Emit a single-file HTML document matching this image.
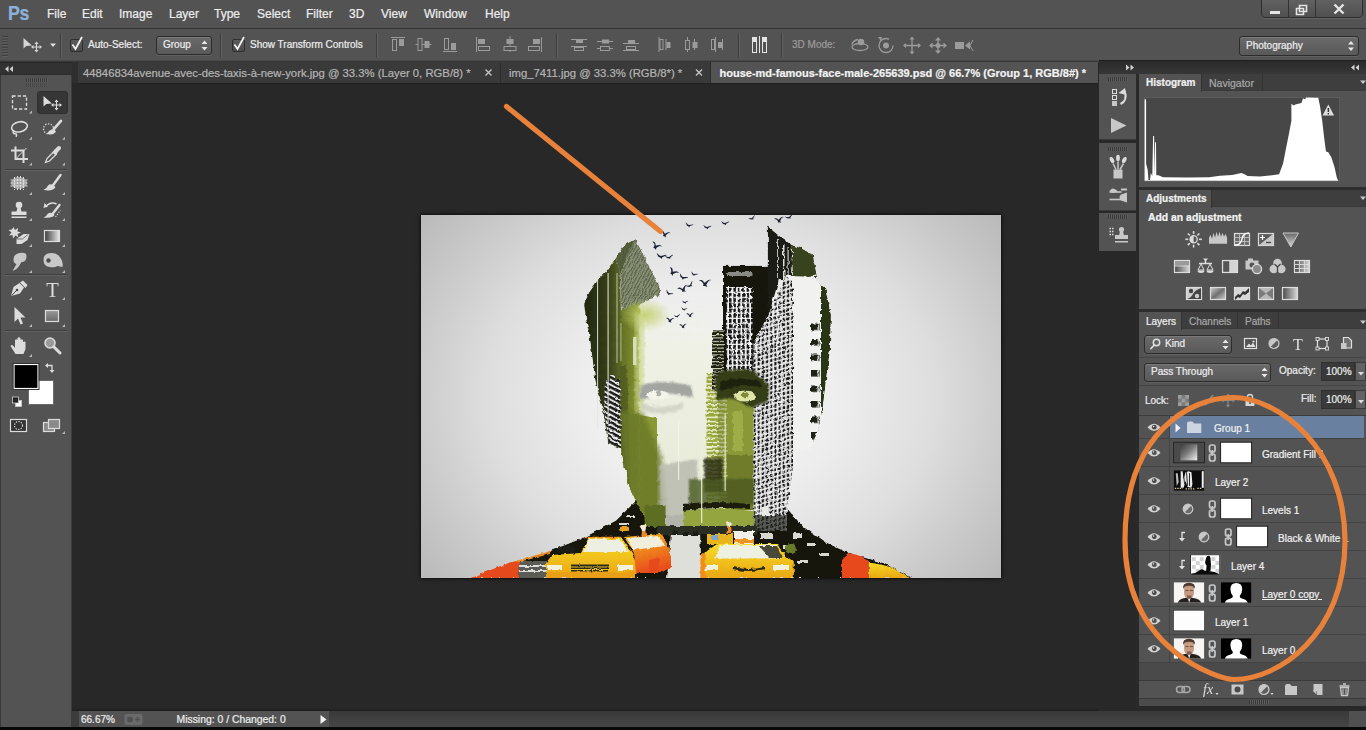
<!DOCTYPE html>
<html><head><meta charset="utf-8"><title>Photoshop</title>
<style>
*{box-sizing:border-box;margin:0;padding:0}
html,body{width:1366px;height:730px;overflow:hidden;background:#282828}
body{position:relative;font-family:"Liberation Sans",sans-serif;font-size:10px;color:#ececec;-webkit-text-stroke:.22px currentColor}
.a{position:absolute}
.t{position:absolute;white-space:nowrap;line-height:12px}
#menubar{left:0;top:0;width:1366px;height:28px;background:#535353}
#menubar span{position:absolute;top:7px;font-size:12px;color:#ededed;white-space:nowrap;line-height:14px}
#optbar{left:0;top:28px;width:1366px;height:34px;background:#535353;border-top:1px solid #303030}
.dd{position:absolute;border:1px solid #2c2c2c;border-radius:3px;background:linear-gradient(#6a6a6a,#595959);box-shadow:inset 0 1px 0 #7a7a7a, 0 1px 0 #616161}
.cb{position:absolute;width:13px;height:13px;border:1px solid #2e2e2e;background:linear-gradient(#5c5c5c,#4b4b4b);border-radius:2px}
.vsep{position:absolute;width:2px;border-left:1px solid #3c3c3c;border-right:1px solid #626262}
#toolbox{left:0;top:62px;width:72px;height:665px;background:#535353;border-left:1px solid #3a3a3a;border-right:1px solid #3c3c3c}
.hsep{position:absolute;height:2px;border-top:1px solid #3e3e3e;border-bottom:1px solid #626262}
#tabbar{left:78px;top:63px;width:1020px;height:20px;background:#3a3a3a}
.tab{position:absolute;top:0;height:20px;font-size:11.3px;color:#b4b4b4;line-height:20px;white-space:nowrap}
.panel{position:absolute;left:1139px;width:227px;background:#535353}
.ptabs{position:absolute;left:0;top:0;width:227px;height:17px;background:#3e3e3e;border-bottom:1px solid #3a3a3a}
.ptab{position:absolute;top:0;height:17px;line-height:18px;font-size:10px;color:#a8a8a8;text-align:left;padding-left:7px;border-right:1px solid #333}
.ptab.on{background:#535353;color:#f0f0f0;font-weight:bold;height:18px}
.row{position:absolute;left:0;width:227px;height:28px;border-bottom:1px solid #434343}
.eyecol{position:absolute;left:0;top:0;width:31px;height:100%;border-right:1px solid #434343}
.th{position:absolute;width:31px;height:21px;top:3px}
.ln{position:absolute;font-size:10px;line-height:12px;top:9.5px;color:#f0f0f0;white-space:nowrap}
</style></head>
<body>
<!-- MENU BAR -->
<div id="menubar" class="a">
<span style="left:7.5px;top:2px;font-size:20.5px;font-weight:bold;color:#8db2da;line-height:22px;letter-spacing:-.5px;transform:scaleX(.87);transform-origin:0 0">Ps</span>
<span style="left:47px">File</span><span style="left:82px">Edit</span><span style="left:119px">Image</span><span style="left:169px">Layer</span><span style="left:214px">Type</span><span style="left:257px">Select</span><span style="left:306px">Filter</span><span style="left:349px">3D</span><span style="left:381px">View</span><span style="left:424px">Window</span><span style="left:485px">Help</span>
<div class="a" style="left:1261px;top:-1px;width:102px;height:19px;border:1px solid #2d2d2d;border-radius:0 0 4px 4px;background:linear-gradient(#616161,#505050);box-shadow:0 1px 0 #646464"></div>
<div class="a" style="left:1288px;top:0;width:1px;height:18px;background:#333"></div>
<div class="a" style="left:1315px;top:0;width:1px;height:18px;background:#333"></div>
</div>
<!-- OPTIONS BAR -->
<div id="optbar" class="a">
<div class="vsep" style="left:60px;top:4px;height:24px"></div>
<div class="cb" style="left:70px;top:10px"></div>
<div class="t" style="left:88px;top:10px">Auto-Select:</div>
<div class="dd" style="left:156px;top:7px;width:56px;height:19px"></div>
<div class="t" style="left:163px;top:10px">Group</div>
<div class="vsep" style="left:220px;top:4px;height:24px"></div>
<div class="cb" style="left:232px;top:10px"></div>
<div class="t" style="left:250px;top:10px">Show Transform Controls</div>
<div class="vsep" style="left:376px;top:4px;height:24px"></div>
<div class="vsep" style="left:556px;top:4px;height:24px"></div>
<div class="vsep" style="left:738px;top:4px;height:24px"></div>
<div class="vsep" style="left:781px;top:4px;height:24px"></div>
<div class="t" style="left:792px;top:10px;color:#9c9c9c">3D Mode:</div>
<div class="dd" style="left:1239px;top:7px;width:120px;height:20px"></div>
<div class="t" style="left:1246px;top:11px;font-size:10px">Photography</div>
</div>
<div class="a" style="left:0;top:60px;width:1099px;height:1px;background:#484848"></div><div class="a" style="left:0;top:61px;width:1099px;height:2px;background:#383838"></div>
<!-- TOOLBOX -->
<div id="toolbox" class="a">
<div class="a" style="left:-1px;top:0;width:72px;height:13px;background:#323232;border-top:1px solid #262626;border-bottom:1px solid #2a2a2a"></div>
<div class="a" style="left:36px;top:29px;width:31px;height:23px;background:#363636;border-radius:3px;border:1px solid #2f2f2f"></div>
<div class="hsep" style="left:4px;top:107px;width:62px"></div>
<div class="hsep" style="left:4px;top:212px;width:62px"></div>
<div class="hsep" style="left:4px;top:268px;width:62px"></div>
</div>
<!-- TAB BAR -->
<div id="tabbar" class="a">
<div class="tab" style="left:5px">44846834avenue-avec-des-taxis-à-new-york.jpg @ 33.3% (Layer 0, RGB/8) *</div>
<div class="a" style="left:422px;top:0;width:1px;height:20px;background:#2c2c2c"></div>
<div class="tab" style="left:431px">img_7411.jpg @ 33.3% (RGB/8*) *</div>
<div class="a" style="left:632px;top:-1px;width:388px;height:21px;background:#535353;border-left:1px solid #2c2c2c"></div>
<div class="tab" style="left:641.5px;font-size:11px;font-weight:bold;color:#f2f2f2">house-md-famous-face-male-265639.psd @ 66.7% (Group 1, RGB/8#) *</div>
</div>
<div class="a" style="left:72px;top:62px;width:6px;height:21px;background:#2e2e2e"></div>
<div class="a" style="left:78px;top:83px;width:1020px;height:1px;background:#1f1f1f"></div>
<!-- ARTWORK -->
<div id="art" class="a" style="left:421px;top:215px;width:580px;height:363px;background:radial-gradient(ellipse 62% 80% at 50% 50%,#f2f2f2 0%,#eeeeee 35%,#dedede 62%,#cdcdcd 80%,#b9b9b9 102%);box-shadow:0 0 4px #000"></div>
<svg class="a" id="artsvg" style="left:421px;top:215px" width="580" height="363" viewBox="0 0 580 363">
<defs>
<filter id="rough" x="-5%" y="-5%" width="110%" height="110%"><feTurbulence type="fractalNoise" baseFrequency=".35" numOctaves="2" seed="3" result="n"/><feDisplacementMap in="SourceGraphic" in2="n" scale="4"/></filter>
<filter id="grain" x="0" y="0" width="100%" height="100%"><feTurbulence type="fractalNoise" baseFrequency=".5 .12" numOctaves="2" seed="8" result="n"/><feColorMatrix in="n" type="matrix" values="0 0 0 0 0  0 0 0 0 0  0 0 0 0 0  1.6 0 0 0 -.55" result="a"/><feComposite in="SourceGraphic" in2="a" operator="out"/></filter>
<filter id="rough2" x="0" y="0" width="100%" height="100%"><feTurbulence type="fractalNoise" baseFrequency=".22" numOctaves="2" seed="11" result="n"/><feDisplacementMap in="SourceGraphic" in2="n" scale="3.5" xChannelSelector="R" yChannelSelector="G"/></filter>
<filter id="blur2"><feGaussianBlur stdDeviation="2.2"/></filter>
<filter id="blur1"><feGaussianBlur stdDeviation="1"/></filter>
<pattern id="winA" width="4.400" height="5.200" patternUnits="userSpaceOnUse"><rect width="4.400" height="5.200" fill="#f2f2f2"/><rect x="0" width="2.500" height="4" fill="#141414"/></pattern>
<pattern id="winB" width="4.200" height="4.600" patternUnits="userSpaceOnUse" patternTransform="skewY(-16)"><rect width="4.200" height="4.600" fill="#efefef"/><rect x="0.500" y="0.700" width="2.300" height="2.900" fill="#161616"/></pattern>
<pattern id="winC" width="30" height="15.500" patternUnits="userSpaceOnUse"><rect x="0" y="0" width="15" height="6.500" fill="#1c2016"/><rect x="6.500" y="0" width="1.400" height="6.500" fill="#ddd"/></pattern>
<pattern id="hl" width="6" height="3.400" patternUnits="userSpaceOnUse"><rect width="6" height="3.400" fill="#1a1c10"/><rect y="0" width="6" height="1.100" fill="#d8dcc0"/></pattern>
<pattern id="diag" width="4" height="5" patternUnits="userSpaceOnUse" patternTransform="skewY(28)"><rect width="4" height="5" fill="#e6e6e6"/><rect width="4" height="2.800" fill="#1c1c1c"/></pattern>
<pattern id="ctr" width="8" height="4.200" patternUnits="userSpaceOnUse"><rect width="8" height="4.200" fill="#9aa740"/><rect y="0" width="8" height="1.500" fill="#eef2cf"/></pattern>
<pattern id="hatch" width="3" height="6" patternUnits="userSpaceOnUse" patternTransform="rotate(28)"><rect width="3" height="6" fill="#8d967a"/><rect width="1.300" height="6" fill="#596048"/></pattern>
<linearGradient id="hairL" x1="0" y1="0" x2="1" y2="0"><stop offset="0" stop-color="#20260f"/><stop offset=".6" stop-color="#343c18"/><stop offset="1" stop-color="#5a6626"/></linearGradient>
<linearGradient id="cheekL" x1="0" y1="0" x2="1" y2="0"><stop offset="0" stop-color="#5f6c22"/><stop offset=".55" stop-color="#8d9b37"/><stop offset="1" stop-color="#b4c162"/></linearGradient>
<linearGradient id="pale" x1="0" y1="0" x2="0" y2="1"><stop offset="0" stop-color="#f0f1ea" stop-opacity="0"/><stop offset=".2" stop-color="#eff1e6"/><stop offset="1" stop-color="#e6e9d4"/></linearGradient>
<linearGradient id="taxi" x1="0" y1="0" x2="0" y2="1"><stop offset="0" stop-color="#f7dc28"/><stop offset="1" stop-color="#eaa612"/></linearGradient>
<linearGradient id="taxiO" x1="0" y1="0" x2=".3" y2="1"><stop offset="0" stop-color="#f5b818"/><stop offset="1" stop-color="#e8501c"/></linearGradient>
<radialGradient id="glow" cx=".5" cy=".5" r=".5"><stop offset="0" stop-color="#c3d06c" stop-opacity=".95"/><stop offset="1" stop-color="#c3d06c" stop-opacity="0"/></radialGradient>
<clipPath id="headclip"><path d="M214.300 23.900L222.500 39.700L230.700 56.100L239 72.500L241 80L300 84L302 50.700L346.700 50.700L346.700 11.400L360.600 22.800L370.700 30L380 33L392 40L396 62L400 69.700L404 72L410 100L409 135L405 165L402.400 190L398.600 210.600L389.700 233.400L377 237L372 251L369.500 271.400L365.700 293L382 311.600L402.500 326L423 336L464 348.500L490.600 363L49.500 363L84.700 349L129 336L164 322L195 305.500L214.900 286L208.500 271.400L203.500 251L199.700 233.400L187 228.400L182 195.400L174.300 165L169.300 126.700L165.500 106.400L163 89L167.700 78L177.300 64.300L185.500 56L195 42.400L203.300 30Z"/></clipPath>
</defs>
<g filter="url(#rough2)"><g clip-path="url(#headclip)">
<!-- hair dark left -->
<path d="M195 42.400L185.500 56L177.300 64.300L167.700 78L163 89L163.600 102.700L167.700 115L174 165L182 196L187 228L200 234L200 97L199.200 58.800Z" fill="url(#hairL)"/>
<!-- hair hatched -->
<path d="M214.300 23.900L222.500 39.700L230.700 56.100L239 72.500L239 79.400L219.800 89L200.600 97.200L199.200 58.800L195 42.400L203.300 30Z" fill="url(#hatch)"/>
<path d="M214.300 23.900L203.300 30L195 42.400L199.200 58.800L206 40Z" fill="#4b5530" opacity=".8"/>
<!-- green strip left -->
<path d="M199 96L218.500 88L218.500 196L236 200L236 300L214 300L203 251L200 233Z" fill="url(#cheekL)"/>
<path d="M199 150L206 150L210 300L199 300Z" fill="#4a5520" opacity=".7"/>
<!-- pale face -->
<rect x="218.400" y="84" width="72" height="226" fill="url(#pale)"/>
<ellipse cx="224" cy="100" rx="26" ry="17" fill="url(#glow)"/>
<path d="M218.400 200L236 203L236 300L218.400 300Z" fill="#8b9936"/>
<path d="M199 196L222 198L240 240L246 300L212 300L203 251Z" fill="#6c7a2a" opacity=".85" filter="url(#blur2)"/>
<rect x="214" y="100" width="9" height="96" fill="#c9d48a" opacity=".75" filter="url(#blur2)"/>
<!-- ear stripes left -->
<path d="M184 165L199 165L200 233L188 228L183 196Z" fill="url(#diag)"/>
<!-- left eye -->
<path d="M218.400 171Q240 163 270 171L272 183Q250 176 234 180L218.400 186Z" fill="#a3a5a0" filter="url(#blur1)"/>
<ellipse cx="237" cy="180" rx="11" ry="4.500" fill="#f3f5ea"/><circle cx="237.500" cy="178.500" r="2.800" fill="#aeb0a8"/>
<path d="M220 187Q238 197 262 187L262 193Q240 204 220 194Z" fill="#c9ccbc" opacity=".7" filter="url(#blur1)"/>
<!-- beard -->
<path d="M238 250L276 244L277 316L240 316Z" fill="#b9bbb0" opacity=".85" filter="url(#blur1)"/>
<!-- center building strip -->
<rect x="285.500" y="158" width="21" height="132" fill="url(#ctr)"/>
<rect x="297" y="160" width="9.500" height="130" fill="#6f7c2c" opacity=".45"/>
<!-- right cheek green -->
<rect x="306" y="170" width="28" height="125" fill="#8a9838"/>
<rect x="306" y="240" width="28" height="55" fill="#6f7c2a"/>
<rect x="312" y="196" width="10" height="40" fill="#9fad48"/>
<!-- black building -->
<rect x="302" y="50.700" width="45" height="112" fill="#131310"/>
<rect x="305" y="72" width="26.500" height="86" fill="url(#winA)"/>
<rect x="305" y="57" width="26.500" height="4" fill="#8a8a84"/>
<rect x="291" y="115" width="12" height="60" fill="url(#hl)"/>
<!-- tower -->
<path d="M346.700 11.400L360.600 22.800L370.700 30L371 64L358 64L349 96L346.700 122Z" fill="#1a1c13"/>
<rect x="362" y="30" width="1.500" height="34" fill="#ddd"/><rect x="366.500" y="32" width="1.200" height="32" fill="#ccc"/><rect x="356" y="24" width="1" height="40" fill="#bbb"/>
<!-- foliage top right -->
<path d="M370.700 30L380 33L392 40L396 62L372 62Z" fill="#38431b" filter="url(#rough)"/>
<!-- right hair -->
<path d="M398 68L404 72L410 100L409 135L405 165L402 190L398 212L392 232L392 160Z" fill="#2b3516"/>
<!-- white building -->
<path d="M349.200 96.300L364.400 60.800L392.300 62L400 69.700L400 215L389.700 233.400L377 237L372 251L369.500 271.400L366 300L332.700 300L332.700 128Z" fill="#f1f1ef"/>
<path d="M349.200 96.300L364.400 62L372 66L372 300L332.700 300L332.700 128Z" fill="url(#winB)"/>
<rect x="383.400" y="103" width="15.200" height="130" fill="url(#winC)"/>
<!-- right eye -->
<path d="M294 162Q305 150 333 156L348 170L347 186L330 193Q310 178 296 186Z" fill="#343e18" filter="url(#blur1)"/><path d="M298 168Q312 160 338 166L340 172Q318 168 300 176Z" fill="#1c220c"/>
<ellipse cx="324" cy="181" rx="11" ry="5.500" fill="#dfe6a8"/><circle cx="324" cy="180" r="3.200" fill="#7f8a38"/>
<!-- nose shadow / center dark -->
<rect x="283" y="243" width="19" height="34" fill="#20250f" opacity=".8" filter="url(#blur1)"/>
<rect x="268" y="264" width="65" height="25" fill="#4c5a20" opacity=".8" filter="url(#blur1)"/>
<!-- mouth / chin -->
<path d="M262 289Q295 285 329 289L329 294Q295 291 262 296Z" fill="#1a1e0d"/>
<path d="M262.400 296Q295 291 333 296L334 311.600L262.400 311.600Z" fill="#94a540"/>
<!-- torso dark -->
<path d="M0 363L49.500 363L84.700 349L129 336L164 322L195 305.500L214.900 286L222 300L236 300L236 311L365 311L365.700 293L382 311.600L402.500 326L423 336L464 348.500L490.600 363Z" fill="#15160f"/>
<!-- trees & beard column under chin -->
<rect x="223.500" y="290" width="21" height="22" fill="#5d6d24"/>
<rect x="244" y="300" width="18.400" height="16" fill="#b3b4ac"/>
<!-- building right of neck -->
<rect x="332.800" y="285" width="33" height="31" fill="url(#winB)"/>
<rect x="332.800" y="300" width="33" height="16" fill="#1d1f18" opacity=".7"/>
<rect x="341" y="292" width="7" height="9" fill="#e8e8e4"/>
<!-- street scene -->
<path d="M250 318L279 318L281 363L246 363Z" fill="#dfdfda"/>
<rect x="236" y="311" width="100" height="9" fill="#2c2f24"/>
<path d="M252 316h5v4h-5zM262 317h6v4h-6zM272 316h5v5h-5z" fill="#1c1d18"/>
<g fill="#d9d9d2"><rect x="372" y="318" width="9" height="5"/><rect x="386" y="328" width="8" height="3"/><rect x="399" y="338" width="9" height="3"/><rect x="377" y="345" width="10" height="3"/><rect x="362" y="330" width="5" height="3"/><rect x="340" y="318" width="12" height="6"/><rect x="205" y="300" width="8" height="2"/><rect x="198" y="308" width="10" height="2"/></g>
<ellipse cx="370" cy="334" rx="6" ry="5" fill="#6a7a2a"/>
<!-- far-left red car -->
<path d="M51 363L56 352L72 344L98 344L98 363Z" fill="#e64a1b"/>
<path d="M72 344L129 336L129 339L98 347Z" fill="#e98a1c"/>
<rect x="98" y="346" width="27" height="17" fill="#5b5c56"/><rect x="98" y="350" width="27" height="2" fill="#ddd"/><rect x="98" y="355" width="27" height="2" fill="#ddd"/>
<!-- left big taxi -->
<path d="M125 363L125 348L131 340L160 338L168 322L200 322L211 338L215 348L215 363Z" fill="url(#taxi)"/>
<path d="M162 337L168 324L199 324L208 337Z" fill="#ecefe2"/>
<path d="M164 322.500L200 322.500" stroke="#ee8d1e" stroke-width="1.600"/>
<rect x="137" y="331" width="17" height="7" rx="2" fill="#1a1a14"/>
<rect x="150" y="349.500" width="38" height="7" fill="#2c2a1c"/><path d="M150 352h38M150 354.500h38" stroke="#e9c21e" stroke-width="1"/>
<rect x="127" y="350" width="14" height="5" fill="#f4f1dc"/><rect x="197" y="350" width="15" height="5" fill="#f4f1dc"/>
<rect x="125" y="357" width="90" height="6" fill="#e9a012"/>
<!-- taxis behind -->
<path d="M203 322L240 319L247 330L250 342L250 352L240 358L215 358L213 338Z" fill="url(#taxiO)"/>
<path d="M206 323L238 321L244 331L212 335Z" fill="#f1eedb"/>
<path d="M222.500 322L219.500 310L225.500 310Z" fill="#f3e9d8"/><path d="M221 316h3.500l1 6h-5.500z" fill="#ef8a26"/>
<rect x="199" y="311" width="9" height="5" rx="2" fill="#e9a122"/>
<path d="M228 345l10-2v12l-10 2z" fill="#e5491c"/>
<!-- right big taxi -->
<path d="M279.500 363L279.500 346L286 336L296 329L356 329L364 340L372.800 347L372.800 363Z" fill="url(#taxi)"/>
<path d="M294 343.400L299 330L355 330L360 343.400Z" fill="#eef0e2"/>
<path d="M338 331L356 331L361 343L349 343Z" fill="#2a2c1c" opacity=".85"/>
<rect x="313" y="316" width="20" height="13" fill="#f1efe8"/><rect x="313" y="324" width="20" height="4" fill="#ee9422"/>
<rect x="286" y="319" width="26" height="10" fill="#e8b51c"/><rect x="290" y="320" width="8" height="5" fill="#7fa6c8"/>
<path d="M308 318L305 307.500L311 307.500Z" fill="#f4ead8"/><path d="M306.500 312h3.500l1.300 6h-6z" fill="#ef8a26"/>
<path d="M312 353q15 4 32 0" stroke="#2a2618" stroke-width="2.200" fill="none"/>
<rect x="283" y="350" width="14" height="5" fill="#f4f1dc"/><rect x="352" y="350" width="16" height="5" fill="#f4f1dc"/>
<path d="M279.500 340l5-3v26h-5z" fill="#ee8d1e"/>
<!-- far right car -->
<path d="M421 363L421 344L427 338L440 340L447.600 347L447.600 363Z" fill="#e8481b"/>
<path d="M447.600 363L447.600 347L470 352L488.600 363Z" fill="url(#taxi)"/>
</g></g>
<!-- vertical white streaks -->
<rect x="176" y="62" width="1.100" height="150" fill="#e4e6da" opacity=".85"/>
<rect x="186.500" y="58" width="1.200" height="150" fill="#e4e6da" opacity=".85"/>
<rect x="195.500" y="58" width="1" height="90" fill="#d8dcc6" opacity=".8"/>
<rect x="199.500" y="108" width=".9" height="38" fill="#e4e6da" opacity=".7"/>
<rect x="212" y="122" width="3.500" height="28" fill="#e3e7cc" opacity=".85"/>
<rect x="189" y="160" width="5" height="42" fill="url(#diag)"/>
<rect x="280" y="218" width="1.300" height="90" fill="#eef2d4" opacity=".85"/>
<rect x="303.500" y="198" width="1.300" height="78" fill="#eef2d4" opacity=".8"/>
<rect x="257" y="205" width="1.200" height="60" fill="#f4f6e6" opacity=".8"/>
<!-- birds -->
<g fill="#1b2234">
<symbol id="b1" viewBox="-6 -4 12 8" overflow="visible"><path d="M-5.500 -1.500q2.500-1.800 4 .3l1.200 1 1.300-1.300q2-2.500 4.500-1.500q-2.500.3-3.300 2.300l-1 2.200 1.200 1.700-2.400-.6-1.500.2 .3-1.600q-1.300-2.700-4.300-2.700z"/></symbol>
<symbol id="b2" viewBox="-6 -4 12 8" overflow="visible"><path d="M-5 -2.500l3.500 2.200 1.500.3 4.500-2 1 .3-4 2.700-.5 1.800-1.500-1.200-2-.4z"/></symbol>
<use href="#b1" x="-6" y="-4" width="12" height="8" transform="translate(244 19) rotate(20) scale(0.9)"/>
<use href="#b1" x="-6" y="-4" width="12" height="8" transform="translate(235 31) rotate(35) scale(1.0)"/>
<use href="#b2" x="-6" y="-4" width="12" height="8" transform="translate(240 41) rotate(10) scale(1.0)"/>
<use href="#b2" x="-6" y="-4" width="12" height="8" transform="translate(248 42) rotate(-10) scale(0.8)"/>
<use href="#b2" x="-6" y="-4" width="12" height="8" transform="translate(268 10) rotate(15) scale(0.8)"/>
<use href="#b2" x="-6" y="-4" width="12" height="8" transform="translate(286 12) rotate(5) scale(0.8)"/>
<use href="#b2" x="-6" y="-4" width="12" height="8" transform="translate(304 8) rotate(0) scale(0.8)"/>
<use href="#b2" x="-6" y="-4" width="12" height="8" transform="translate(331 3) rotate(-25) scale(0.7)"/>
<use href="#b1" x="-6" y="-4" width="12" height="8" transform="translate(358 5) rotate(-5) scale(0.9)"/>
<use href="#b2" x="-6" y="-4" width="12" height="8" transform="translate(368 2) rotate(-20) scale(0.8)"/>
<use href="#b1" x="-6" y="-4" width="12" height="8" transform="translate(252 57) rotate(40) scale(1.0)"/>
<use href="#b2" x="-6" y="-4" width="12" height="8" transform="translate(262 62) rotate(25) scale(0.9)"/>
<use href="#b2" x="-6" y="-4" width="12" height="8" transform="translate(273 59) rotate(20) scale(0.7)"/>
<use href="#b1" x="-6" y="-4" width="12" height="8" transform="translate(284 68) rotate(5) scale(1.15)"/>
<use href="#b2" x="-6" y="-4" width="12" height="8" transform="translate(248 78) rotate(30) scale(0.8)"/>
<use href="#b1" x="-6" y="-4" width="12" height="8" transform="translate(262 74) rotate(-15) scale(1.0)"/>
<use href="#b2" x="-6" y="-4" width="12" height="8" transform="translate(269 70) rotate(-40) scale(0.8)"/>
<use href="#b2" x="-6" y="-4" width="12" height="8" transform="translate(264 87) rotate(0) scale(0.6)"/>
<use href="#b2" x="-6" y="-4" width="12" height="8" transform="translate(263 94) rotate(10) scale(0.6)"/>
<use href="#b1" x="-6" y="-4" width="12" height="8" transform="translate(249 105) rotate(10) scale(0.8)"/>
<use href="#b2" x="-6" y="-4" width="12" height="8" transform="translate(256 101) rotate(-10) scale(0.6)"/>
<use href="#b1" x="-6" y="-4" width="12" height="8" transform="translate(269 100) rotate(0) scale(0.7)"/>
<use href="#b1" x="-6" y="-4" width="12" height="8" transform="translate(262 111) rotate(0) scale(0.7)"/>
</g>
</svg>
<!-- STATUS BAR -->
<div class="a" style="left:72px;top:708px;width:1027px;height:3px;background:linear-gradient(#282828,#1e1e1e)"></div>
<div class="a" style="left:72px;top:711px;width:1294px;height:16px;background:linear-gradient(#393939,#464646)"></div>
<div class="a" style="left:1349px;top:711px;width:17px;height:16px;background:#505050"></div>
<div class="a" style="left:72px;top:711px;width:257px;height:16px;background:#535353"></div>
<div class="a" style="left:72px;top:711px;width:7px;height:16px;background:#3c3c3c"></div>
<div class="t" style="left:81px;top:714px">66.67%</div>
<div class="t" style="left:176.500px;top:714px;font-size:10.400px">Missing: 0 / Changed: 0</div>
<div class="a" style="left:0;top:727px;width:1366px;height:3px;background:#090909"></div>
<!-- RIGHT DOCK -->
<div class="a" style="left:1099px;top:60px;width:267px;height:14px;background:linear-gradient(#2a2a2a,#373737);border-top:1px solid #1e1e1e"></div>
<div class="a" style="left:1136px;top:74px;width:3px;height:632px;background:#2a2a2a"></div>
<div class="a" style="left:1099px;top:74px;width:37px;height:66px;background:#535353;border-bottom:1px solid #3a3a3a"></div>
<div class="a" style="left:1099px;top:143px;width:37px;height:68px;background:#535353;border-bottom:1px solid #3a3a3a"></div>
<div class="a" style="left:1099px;top:213px;width:37px;height:38px;background:#535353"></div>
<!-- histogram panel -->
<div class="panel" style="top:74px;height:113px">
 <div class="ptabs"><div class="ptab on" style="left:0;width:63px">Histogram</div><div class="ptab" style="left:63px;width:61px;font-size:10.5px">Navigator</div></div>
 <div class="a" style="left:5px;top:23px;width:196px;height:85px;background:#474747;border:1px solid #5c5c5c"></div>
</div>
<div class="a" style="left:1139px;top:187px;width:227px;height:3px;background:#2e2e2e"></div>
<!-- adjustments panel -->
<div class="panel" style="top:190px;height:119px">
 <div class="ptabs"><div class="ptab on" style="left:0;width:73px">Adjustments</div></div>
 <div class="t" style="left:9px;top:22px;font-size:10.4px;font-weight:bold;color:#f4f4f4">Add an adjustment</div>
</div>
<div class="a" style="left:1139px;top:309px;width:227px;height:3px;background:#2e2e2e"></div>
<!-- layers panel -->
<div class="panel" style="top:312px;height:394px">
 <div class="ptabs"><div class="ptab on" style="left:0;width:43px;font-weight:normal;line-height:20px">Layers</div><div class="ptab" style="left:43px;width:56px;line-height:20px">Channels</div><div class="ptab" style="left:99px;width:41px;line-height:20px">Paths</div></div>
 <div class="dd" style="left:5px;top:23px;width:88px;height:19px"></div>
 <div class="t" style="left:26px;top:26px">Kind</div>
 <div class="a" style="left:0;top:45px;width:227px;height:1px;background:#444"></div>
 <div class="dd" style="left:5px;top:51px;width:127px;height:19px"></div>
 <div class="t" style="left:12px;top:54px">Pass Through</div>
 <div class="t" style="left:140px;top:53px">Opacity:</div>
 <div class="a" style="left:182px;top:50px;width:34px;height:19px;background:#3a3a3a;border:1px solid #303030"></div>
 <div class="t" style="left:187px;top:54px">100%</div>
 <div class="a" style="left:216px;top:50px;width:11px;height:19px;background:#626262;border:1px solid #3a3a3a"></div>
 <div class="a" style="left:0;top:73px;width:227px;height:1px;background:#444"></div>
 <div class="t" style="left:6px;top:83px">Lock:</div>
 <div class="t" style="left:162px;top:81px">Fill:</div>
 <div class="a" style="left:182px;top:78px;width:34px;height:19px;background:#3a3a3a;border:1px solid #303030"></div>
 <div class="t" style="left:187px;top:82px">100%</div>
 <div class="a" style="left:216px;top:78px;width:11px;height:19px;background:#626262;border:1px solid #3a3a3a"></div>
 <!-- layer list -->
 <div class="a" style="left:0;top:103px;width:227px;height:265px;background:#4a4a4a;border-top:1px solid #3c3c3c"></div>
 <div class="row" style="top:104px;height:23px;background:#535353"><div class="eyecol"></div><div class="a" style="left:31px;top:0;width:194px;height:22px;background:#6a80a0"></div><div class="ln" style="left:75px;top:7px">Group 1</div></div>
 <div class="row" style="top:127px;background:#535353"><div class="eyecol"></div><div class="ln" style="left:123px">Gradient Fill 1</div></div>
 <div class="row" style="top:155px;background:#535353"><div class="eyecol"></div><div class="ln" style="left:76px">Layer 2</div></div>
 <div class="row" style="top:183px;background:#535353"><div class="eyecol"></div><div class="ln" style="left:123px">Levels 1</div></div>
 <div class="row" style="top:211px;background:#535353"><div class="eyecol"></div><div class="ln" style="left:139px">Black &amp; White 1</div></div>
 <div class="row" style="top:239px;background:#535353"><div class="eyecol"></div><div class="ln" style="left:92px">Layer 4</div></div>
 <div class="row" style="top:267px;background:#535353"><div class="eyecol"></div><div class="ln" style="left:123px;text-decoration:underline">Layer 0 copy&nbsp;</div></div>
 <div class="row" style="top:295px;background:#535353"><div class="eyecol"></div><div class="ln" style="left:76px">Layer 1</div></div>
 <div class="row" style="top:323px;background:#535353"><div class="eyecol"></div><div class="ln" style="left:123px">Layer 0</div></div>
 <div class="a" style="left:0;top:368px;width:227px;height:18px;background:#535353;border-top:1px solid #3a3a3a"></div>
 <div class="a" style="left:0;top:386px;width:227px;height:8px;background:#4c4c4c;border-top:1px solid #3a3a3a"></div>
</div>
<!-- ICONS OVERLAY -->
<svg class="a" id="icons" style="left:0;top:0" width="1366" height="730" viewBox="0 0 1366 730" fill="none">
<rect x="1270" y="11" width="10" height="3" fill="#e4e4e4"/>
<path d="M1299.5 5.500h7v6h-7z M1296.500 8.500h7v6h-7z" stroke="#e4e4e4" stroke-width="1.600" fill="#585858"/>
<path d="M1334.500 4.500l9 9M1343.500 4.500l-9 9" stroke="#e4e4e4" stroke-width="2.400"/>
<rect x="2" y="36.0" width="6" height="1" fill="#3b3b3b"/><rect x="2" y="37.0" width="6" height="1" fill="#606060"/>
<rect x="2" y="38.7" width="6" height="1" fill="#3b3b3b"/><rect x="2" y="39.7" width="6" height="1" fill="#606060"/>
<rect x="2" y="41.4" width="6" height="1" fill="#3b3b3b"/><rect x="2" y="42.4" width="6" height="1" fill="#606060"/>
<rect x="2" y="44.1" width="6" height="1" fill="#3b3b3b"/><rect x="2" y="45.1" width="6" height="1" fill="#606060"/>
<rect x="2" y="46.8" width="6" height="1" fill="#3b3b3b"/><rect x="2" y="47.8" width="6" height="1" fill="#606060"/>
<rect x="2" y="49.5" width="6" height="1" fill="#3b3b3b"/><rect x="2" y="50.5" width="6" height="1" fill="#606060"/>
<rect x="2" y="52.2" width="6" height="1" fill="#3b3b3b"/><rect x="2" y="53.2" width="6" height="1" fill="#606060"/>
<rect x="2" y="54.9" width="6" height="1" fill="#3b3b3b"/><rect x="2" y="55.9" width="6" height="1" fill="#606060"/>
<path d="M23.5 38l0 10.500 2.800-2.600 5.600-.3z" fill="#d6d6d6"/><path d="M36.5 42.5v9M32.0 47h9" stroke="#d6d6d6" stroke-width="1.200"/><path d="M36.5 41.5l2 2.500h-4zM36.5 52.5l2-2.500h-4zM31.0 47l2.500-2v4zM42.0 47l-2.500-2v4z" fill="#d6d6d6"/>
<path d="M50 43.500h6l-3 3.500z" fill="#e0e0e0"/>
<path d="M72.5 44.5l3 4.500 6.500-12" stroke="#f2f2f2" stroke-width="1.800" fill="none"/>
<path d="M234.5 44.5l3 4.500 6.500-12" stroke="#f2f2f2" stroke-width="1.800" fill="none"/>
<path d="M201.5 44.0h6l-3-3.500zM201.5 47.0h6l-3 3.500z" fill="#e8e8e8"/>
<path d="M1348 44.5h6l-3-3.500zM1348 47.5h6l-3 3.500z" fill="#e8e8e8"/>
<path d="M391 37.500h14" stroke="#9b9b9b"/><rect x="392.5" y="39.500" width="4" height="11" stroke="#9b9b9b" fill="none"/><rect x="399" y="39" width="5" height="7" fill="#9b9b9b"/><path d="M415.5 44.500h16" stroke="#9b9b9b"/><rect x="418.0" y="38.500" width="4" height="12" stroke="#9b9b9b" fill="#535353"/><rect x="424.5" y="41" width="5" height="7" fill="#9b9b9b"/><path d="M443 51.500h14" stroke="#9b9b9b"/><rect x="444.5" y="38.500" width="4" height="11" stroke="#9b9b9b" fill="none"/><rect x="451" y="43" width="5" height="7" fill="#9b9b9b"/><path d="M476.5 37v15" stroke="#9b9b9b"/><rect x="478" y="39" width="7" height="5" fill="#9b9b9b"/><rect x="478.5" y="46.500" width="11" height="4" stroke="#9b9b9b" fill="none"/><path d="M510.0 36v16" stroke="#9b9b9b"/><rect x="506.5" y="39" width="7" height="5" fill="#9b9b9b"/><rect x="504.0" y="46.500" width="12" height="4" stroke="#9b9b9b" fill="#535353"/><path d="M541.5 37v15" stroke="#9b9b9b"/><rect x="533" y="39" width="7" height="5" fill="#9b9b9b"/><rect x="528.5" y="46.500" width="11" height="4" stroke="#9b9b9b" fill="none"/>
<path d="M571 39.500h16M571 46.500h16" stroke="#9b9b9b"/><rect x="576" y="40" width="7" height="3" fill="#9b9b9b"/><rect x="574.5" y="47.500" width="9" height="3" stroke="#9b9b9b" fill="none"/><path d="M597 41.500h16M597 48.500h16" stroke="#9b9b9b"/><rect x="602" y="39.500" width="7" height="4" fill="#9b9b9b"/><rect x="600.5" y="46.500" width="9" height="4" stroke="#9b9b9b" fill="#535353"/><path d="M623 43.500h16M623 50.500h16" stroke="#9b9b9b"/><rect x="628" y="40" width="7" height="3" fill="#9b9b9b"/><rect x="626.5" y="46.500" width="9" height="3" stroke="#9b9b9b" fill="none"/><path d="M659.0 37v15M666.0 39v11" stroke="#9b9b9b"/><rect x="660.0" y="39.500" width="3" height="10" stroke="#9b9b9b" fill="none"/><rect x="666.5" y="42" width="4" height="6" fill="#9b9b9b"/><path d="M687.5 37v15M694.5 39v11" stroke="#9b9b9b"/><rect x="685.5" y="40.500" width="4" height="9" stroke="#9b9b9b" fill="#535353"/><rect x="692.5" y="42" width="5" height="6" fill="#9b9b9b"/><path d="M715.5 37v15M722.5 39v11" stroke="#9b9b9b"/><rect x="711.5" y="39.500" width="3" height="10" stroke="#9b9b9b" fill="none"/><rect x="718" y="42" width="4" height="6" fill="#9b9b9b"/>
<rect x="752.500" y="37.500" width="4" height="15" stroke="#e4e4e4" fill="none"/><rect x="753" y="38" width="3" height="4" fill="#e4e4e4"/><path d="M759.500 36v17" stroke="#e4e4e4"/><rect x="762.500" y="37.500" width="4" height="15" stroke="#e4e4e4" fill="none"/><rect x="763" y="38" width="3" height="4" fill="#e4e4e4"/>
<ellipse cx="860" cy="47" rx="8" ry="3.500" stroke="#9b9b9b" stroke-width="1.300" fill="none"/><circle cx="861" cy="42" r="3.300" fill="#9b9b9b"/><path d="M852 44.500a9 6 0 0 1 6-5" stroke="#9b9b9b" stroke-width="1.300" fill="none"/>
<circle cx="886" cy="45.500" r="7" stroke="#9b9b9b" stroke-width="1.300" fill="none" stroke-dasharray="36 8"/><circle cx="886" cy="45.500" r="3" fill="#9b9b9b"/><path d="M878 37l4 0-1 4z" fill="#9b9b9b"/>
<path d="M912 38v15M904.500 45.500h15" stroke="#9b9b9b" stroke-width="1.300"/><path d="M912 36.500l2.500 3h-5zM912 54.500l2.500-3h-5zM903 45.500l3-2.500v5zM921 45.500l-3-2.500v5z" fill="#9b9b9b"/>
<path d="M938 39v13M931 45.500h14" stroke="#9b9b9b" stroke-width="1.300"/><path d="M938 37l3 3.500h-6zM938 54l3-3.500h-6zM929 45.500l3.500-3v6zM947 45.500l-3.500-3v6z" fill="#9b9b9b"/><circle cx="938" cy="45.500" r="2.500" fill="#9b9b9b"/>
<rect x="955" y="42" width="9" height="7" fill="#9b9b9b"/><path d="M965 45.500l5-4v8z" fill="#9b9b9b"/><path d="M973 40l-3 5.500 3 5.500" stroke="#9b9b9b" fill="none"/>
<path d="M8.5 66v6l-3.500-3zM13 66v6l-3.500-3z" fill="#d0d0d0"/>
<path d="M1126 64.5v6l3.500-3zM1130.5 64.5v6l3.500-3z" fill="#d0d0d0"/>
<path d="M1354.5 64.5v6l-3.500-3zM1359 64.5v6l-3.500-3z" fill="#d0d0d0"/>
<rect x="26" y="78" width="1" height="4" fill="#383838"/><rect x="27" y="78" width="1" height="4" fill="#5e5e5e"/><rect x="28" y="78" width="1" height="4" fill="#383838"/><rect x="29" y="78" width="1" height="4" fill="#5e5e5e"/><rect x="30" y="78" width="1" height="4" fill="#383838"/><rect x="31" y="78" width="1" height="4" fill="#5e5e5e"/><rect x="32" y="78" width="1" height="4" fill="#383838"/><rect x="33" y="78" width="1" height="4" fill="#5e5e5e"/><rect x="34" y="78" width="1" height="4" fill="#383838"/><rect x="35" y="78" width="1" height="4" fill="#5e5e5e"/><rect x="36" y="78" width="1" height="4" fill="#383838"/><rect x="37" y="78" width="1" height="4" fill="#5e5e5e"/><rect x="38" y="78" width="1" height="4" fill="#383838"/><rect x="39" y="78" width="1" height="4" fill="#5e5e5e"/><rect x="40" y="78" width="1" height="4" fill="#383838"/><rect x="41" y="78" width="1" height="4" fill="#5e5e5e"/><rect x="42" y="78" width="1" height="4" fill="#383838"/><rect x="43" y="78" width="1" height="4" fill="#5e5e5e"/><rect x="44" y="78" width="1" height="4" fill="#383838"/><rect x="45" y="78" width="1" height="4" fill="#5e5e5e"/><rect x="46" y="78" width="1" height="4" fill="#383838"/><rect x="47" y="78" width="1" height="4" fill="#5e5e5e"/>
<rect x="26" y="83" width="1" height="4" fill="#454545"/><rect x="27" y="83" width="1" height="4" fill="#585858"/><rect x="28" y="83" width="1" height="4" fill="#454545"/><rect x="29" y="83" width="1" height="4" fill="#585858"/><rect x="30" y="83" width="1" height="4" fill="#454545"/><rect x="31" y="83" width="1" height="4" fill="#585858"/><rect x="32" y="83" width="1" height="4" fill="#454545"/><rect x="33" y="83" width="1" height="4" fill="#585858"/><rect x="34" y="83" width="1" height="4" fill="#454545"/><rect x="35" y="83" width="1" height="4" fill="#585858"/><rect x="36" y="83" width="1" height="4" fill="#454545"/><rect x="37" y="83" width="1" height="4" fill="#585858"/><rect x="38" y="83" width="1" height="4" fill="#454545"/><rect x="39" y="83" width="1" height="4" fill="#585858"/><rect x="40" y="83" width="1" height="4" fill="#454545"/><rect x="41" y="83" width="1" height="4" fill="#585858"/><rect x="42" y="83" width="1" height="4" fill="#454545"/><rect x="43" y="83" width="1" height="4" fill="#585858"/><rect x="44" y="83" width="1" height="4" fill="#454545"/><rect x="45" y="83" width="1" height="4" fill="#585858"/><rect x="46" y="83" width="1" height="4" fill="#454545"/><rect x="47" y="83" width="1" height="4" fill="#585858"/>
<rect x="1108" y="77" width="1" height="4" fill="#383838"/><rect x="1109" y="77" width="1" height="4" fill="#5e5e5e"/><rect x="1110" y="77" width="1" height="4" fill="#383838"/><rect x="1111" y="77" width="1" height="4" fill="#5e5e5e"/><rect x="1112" y="77" width="1" height="4" fill="#383838"/><rect x="1113" y="77" width="1" height="4" fill="#5e5e5e"/><rect x="1114" y="77" width="1" height="4" fill="#383838"/><rect x="1115" y="77" width="1" height="4" fill="#5e5e5e"/><rect x="1116" y="77" width="1" height="4" fill="#383838"/><rect x="1117" y="77" width="1" height="4" fill="#5e5e5e"/><rect x="1118" y="77" width="1" height="4" fill="#383838"/><rect x="1119" y="77" width="1" height="4" fill="#5e5e5e"/><rect x="1120" y="77" width="1" height="4" fill="#383838"/><rect x="1121" y="77" width="1" height="4" fill="#5e5e5e"/><rect x="1122" y="77" width="1" height="4" fill="#383838"/><rect x="1123" y="77" width="1" height="4" fill="#5e5e5e"/><rect x="1124" y="77" width="1" height="4" fill="#383838"/><rect x="1125" y="77" width="1" height="4" fill="#5e5e5e"/><rect x="1126" y="77" width="1" height="4" fill="#383838"/><rect x="1127" y="77" width="1" height="4" fill="#5e5e5e"/>
<rect x="1108" y="147" width="1" height="4" fill="#383838"/><rect x="1109" y="147" width="1" height="4" fill="#5e5e5e"/><rect x="1110" y="147" width="1" height="4" fill="#383838"/><rect x="1111" y="147" width="1" height="4" fill="#5e5e5e"/><rect x="1112" y="147" width="1" height="4" fill="#383838"/><rect x="1113" y="147" width="1" height="4" fill="#5e5e5e"/><rect x="1114" y="147" width="1" height="4" fill="#383838"/><rect x="1115" y="147" width="1" height="4" fill="#5e5e5e"/><rect x="1116" y="147" width="1" height="4" fill="#383838"/><rect x="1117" y="147" width="1" height="4" fill="#5e5e5e"/><rect x="1118" y="147" width="1" height="4" fill="#383838"/><rect x="1119" y="147" width="1" height="4" fill="#5e5e5e"/><rect x="1120" y="147" width="1" height="4" fill="#383838"/><rect x="1121" y="147" width="1" height="4" fill="#5e5e5e"/><rect x="1122" y="147" width="1" height="4" fill="#383838"/><rect x="1123" y="147" width="1" height="4" fill="#5e5e5e"/><rect x="1124" y="147" width="1" height="4" fill="#383838"/><rect x="1125" y="147" width="1" height="4" fill="#5e5e5e"/><rect x="1126" y="147" width="1" height="4" fill="#383838"/><rect x="1127" y="147" width="1" height="4" fill="#5e5e5e"/>
<rect x="1108" y="215" width="1" height="4" fill="#383838"/><rect x="1109" y="215" width="1" height="4" fill="#5e5e5e"/><rect x="1110" y="215" width="1" height="4" fill="#383838"/><rect x="1111" y="215" width="1" height="4" fill="#5e5e5e"/><rect x="1112" y="215" width="1" height="4" fill="#383838"/><rect x="1113" y="215" width="1" height="4" fill="#5e5e5e"/><rect x="1114" y="215" width="1" height="4" fill="#383838"/><rect x="1115" y="215" width="1" height="4" fill="#5e5e5e"/><rect x="1116" y="215" width="1" height="4" fill="#383838"/><rect x="1117" y="215" width="1" height="4" fill="#5e5e5e"/><rect x="1118" y="215" width="1" height="4" fill="#383838"/><rect x="1119" y="215" width="1" height="4" fill="#5e5e5e"/><rect x="1120" y="215" width="1" height="4" fill="#383838"/><rect x="1121" y="215" width="1" height="4" fill="#5e5e5e"/><rect x="1122" y="215" width="1" height="4" fill="#383838"/><rect x="1123" y="215" width="1" height="4" fill="#5e5e5e"/><rect x="1124" y="215" width="1" height="4" fill="#383838"/><rect x="1125" y="215" width="1" height="4" fill="#5e5e5e"/><rect x="1126" y="215" width="1" height="4" fill="#383838"/><rect x="1127" y="215" width="1" height="4" fill="#5e5e5e"/>
<rect x="1249" y="700" width="1" height="4" fill="#383838"/><rect x="1250" y="700" width="1" height="4" fill="#5e5e5e"/><rect x="1251" y="700" width="1" height="4" fill="#383838"/><rect x="1252" y="700" width="1" height="4" fill="#5e5e5e"/><rect x="1253" y="700" width="1" height="4" fill="#383838"/><rect x="1254" y="700" width="1" height="4" fill="#5e5e5e"/><rect x="1255" y="700" width="1" height="4" fill="#383838"/><rect x="1256" y="700" width="1" height="4" fill="#5e5e5e"/><rect x="1257" y="700" width="1" height="4" fill="#383838"/><rect x="1258" y="700" width="1" height="4" fill="#5e5e5e"/><rect x="1259" y="700" width="1" height="4" fill="#383838"/><rect x="1260" y="700" width="1" height="4" fill="#5e5e5e"/><rect x="1261" y="700" width="1" height="4" fill="#383838"/><rect x="1262" y="700" width="1" height="4" fill="#5e5e5e"/><rect x="1263" y="700" width="1" height="4" fill="#383838"/><rect x="1264" y="700" width="1" height="4" fill="#5e5e5e"/><rect x="1265" y="700" width="1" height="4" fill="#383838"/><rect x="1266" y="700" width="1" height="4" fill="#5e5e5e"/><rect x="1267" y="700" width="1" height="4" fill="#383838"/><rect x="1268" y="700" width="1" height="4" fill="#5e5e5e"/>
<path d="M1360 80.5h6l-3 3.500z" fill="#c8c8c8"/>
<path d="M1360 196.5h6l-3 3.500z" fill="#c8c8c8"/>
<path d="M1360 320.5h6l-3 3.500z" fill="#c8c8c8"/>
<rect x="12.5" y="96.0" width="14" height="13" stroke="#dcdcdc" stroke-width="1.300" stroke-dasharray="3.200 2" fill="none"/><path d="M32.0 110.5v3h-3z" fill="#b8b8b8"/>
<path d="M43.5 96.0l0 10.500 2.800-2.600 5.600-.3z" fill="#dcdcdc"/><path d="M56.5 100.5v9M52.0 105.0h9" stroke="#dcdcdc" stroke-width="1.200"/><path d="M56.5 99.5l2 2.500h-4zM56.5 110.5l2-2.500h-4zM51.0 105.0l2.500-2v4zM62.0 105.0l-2.500-2v4z" fill="#dcdcdc"/>
<ellipse cx="19.5" cy="126.80000000000001" rx="8" ry="5" transform="rotate(-12 19.5 126.80000000000001)" stroke="#dcdcdc" stroke-width="1.600" fill="none"/><path d="M13.5 130.8q-1 3 1.500 3t1 3" stroke="#dcdcdc" stroke-width="1.500" fill="none"/><path d="M32.0 136.8v3h-3z" fill="#b8b8b8"/>
<circle cx="48.5" cy="128.8" r="5" stroke="#dcdcdc" stroke-width="1.300" stroke-dasharray="1.300 1.500" fill="none"/><path d="M61.0 120.80000000000001l-7 8" stroke="#dcdcdc" stroke-width="2.600" stroke-linecap="round"/><path d="M54.0 128.8q-5 1-7 5q6 2 9-2z" fill="#dcdcdc"/><path d="M65.0 136.8v3h-3z" fill="#b8b8b8"/>
<path d="M15.5 146.5v12.500h12.500M11.0 150.5h12.500v12.500" stroke="#dcdcdc" stroke-width="2" fill="none"/><path d="M16.5 158.0l10-10" stroke="#dcdcdc" stroke-width="1"/><path d="M32.0 162.5v3h-3z" fill="#b8b8b8"/>
<path d="M45.5 162.5l1.500-4 7-7 2.500 2.500-7 7z" fill="none" stroke="#dcdcdc" stroke-width="1.300"/><path d="M53.5 151.0l3 3" stroke="#dcdcdc" stroke-width="3.500"/><path d="M56.0 151.0l3-3" stroke="#dcdcdc" stroke-width="4" stroke-linecap="round"/><path d="M65.0 162.5v3h-3z" fill="#b8b8b8"/>
<ellipse cx="19.0" cy="183" rx="8" ry="6" fill="#a8a8a8"/><path d="M14.5 177v13M17.5 176v14M20.5 176v14M23.5 177v13M10.5 180h17M10.5 183h17M10.5 186h17" stroke="#dcdcdc" stroke-width="1" stroke-dasharray="2 1"/><path d="M32.0 192v3h-3z" fill="#b8b8b8"/>
<path d="M60.5 175l-8 11" stroke="#dcdcdc" stroke-width="2.400" stroke-linecap="round"/><path d="M53.0 185l2.500 2q-2 4.500-12 3q3-1 4.500-4.500q2-2 5-.5z" fill="#dcdcdc"/><path d="M65.0 192v3h-3z" fill="#b8b8b8"/>
<circle cx="19.0" cy="205" r="3.300" fill="#dcdcdc"/><path d="M17.5 207h3l1 5h-5z" fill="#dcdcdc"/><rect x="11.5" y="211.5" width="15" height="3.500" fill="#dcdcdc"/><rect x="11.5" y="216.5" width="15" height="1.500" fill="#dcdcdc"/><path d="M32.0 218v3h-3z" fill="#b8b8b8"/>
<path d="M59.5 205l-7 9" stroke="#dcdcdc" stroke-width="2.400" stroke-linecap="round"/><path d="M52.0 213l2.500 2q-2 3.500-11 2.500q3-1 4-3.500q2-2 4.500-1z" fill="#dcdcdc"/><path d="M45.5 207q5-6 11-3" stroke="#dcdcdc" stroke-width="1.600" fill="none"/><path d="M43.5 208l1-5 3.500 3.500z" fill="#dcdcdc"/><path d="M55.5 217l5-7" stroke="#dcdcdc" stroke-width="1.200" stroke-dasharray="1.200 1.500"/><path d="M65.0 218v3h-3z" fill="#b8b8b8"/>
<path d="M16.5 239l7-5h6l-2 6-6 4h-5z" fill="#dcdcdc"/><path d="M16.5 239h6l6-5" stroke="#777" stroke-width="1" fill="none"/><path d="M13.5 227l1.500 3 3-2-.5 3.500 3.500 1-3.500 1.500 1 3.500-3-2-2.500 3-.5-3.500-3.500.5 2.500-3-3-2.500 3.500-.5z" fill="#dcdcdc"/><path d="M32.0 244v3h-3z" fill="#b8b8b8"/>
<defs><linearGradient id="tg" x1="0" x2="1"><stop offset="0" stop-color="#3c3c3c"/><stop offset="1" stop-color="#e8e8e8"/></linearGradient><linearGradient id="tg2" y1="0" y2="1" x1="0" x2="0"><stop offset="0" stop-color="#999"/><stop offset="1" stop-color="#6a6a6a"/></linearGradient></defs><rect x="44.5" y="230.5" width="15" height="11" fill="url(#tg)" stroke="#dcdcdc" stroke-width="1.200"/><path d="M65.0 244v3h-3z" fill="#b8b8b8"/>
<path d="M13.5 260q0-6 6-7q7-1 7 3q0 6-5 6q-2 4-5 7l-4 2 4-7q-3-1-3-4z" fill="#c8c8c8"/><path d="M32.0 270v3h-3z" fill="#b8b8b8"/>
<path d="M43.5 260q0-7 8-7q6 0 9 5q3 4 2 9l-5-1q-3 2-8 1q-6-1-6-7z" fill="#c8c8c8"/><circle cx="48.5" cy="260.5" r="2.200" fill="#4a4a4a"/><path d="M65.0 270v3h-3z" fill="#b8b8b8"/>
<path d="M11.0 296l2.500-9 6-4 4.500 4.500-4 6z" fill="#dcdcdc"/><path d="M20.0 282.5l3-2 4.500 4.500-2 3z" fill="#dcdcdc"/><path d="M11.5 295.5l5-5" stroke="#444" stroke-width="1"/><circle cx="17.0" cy="290" r="1.300" fill="#444"/><path d="M32.0 297v3h-3z" fill="#b8b8b8"/>
<text x="52.5" y="297" font-family="Liberation Serif,serif" font-size="20.500" text-anchor="middle" fill="#dcdcdc">T</text><path d="M65.0 297v3h-3z" fill="#b8b8b8"/>
<path d="M14.5 307v15l3.500-3.500 2.500 6 2.500-1-2.500-6h5z" fill="#dcdcdc"/><path d="M32.0 324v3h-3z" fill="#b8b8b8"/>
<rect x="45.5" y="310.5" width="13" height="11" fill="url(#tg2)" stroke="#dcdcdc" stroke-width="1.200"/><path d="M65.0 324v3h-3z" fill="#b8b8b8"/>
<path d="M15.5 354l-5-8q1-2 3 0l1.500 2v-8q1.500-1.500 2.500 0v-2q1.500-1.500 3 0v2q1.500-1.500 2.500 0v2q1.500-1 2.500 0v7l-2 5z" fill="#dcdcdc"/><path d="M32.0 354v3h-3z" fill="#b8b8b8"/>
<circle cx="50.0" cy="343" r="5" fill="#9a9a9a" stroke="#dcdcdc" stroke-width="1.600"/><path d="M54.0 347l6 6" stroke="#dcdcdc" stroke-width="3" stroke-linecap="round"/>
<rect x="28.500" y="380.500" width="25" height="24" fill="#fff" stroke="#6a6a6a"/>
<rect x="14" y="364.500" width="24" height="24" fill="#000" stroke="#fff" stroke-width="1.200"/><rect x="13" y="363.500" width="26" height="26" fill="none" stroke="#333" stroke-width="1"/>
<path d="M47.500 365.500h4.500v5" stroke="#dcdcdc" stroke-width="1.300" fill="none"/><path d="M45 365.500l3-2.500v5zM52 373l-2.500-3h5z" fill="#dcdcdc"/>
<rect x="15.500" y="400.500" width="6" height="6" fill="#fff" stroke="#ccc" stroke-width=".8"/><rect x="12.500" y="397" width="6" height="6" fill="#222" stroke="#ccc" stroke-width=".8"/>
<rect x="10.500" y="419.500" width="16" height="12" fill="#333" stroke="#dcdcdc" stroke-width="1.200"/><circle cx="18.500" cy="425.500" r="4" stroke="#dcdcdc" stroke-width="1.100" stroke-dasharray="1.300 1.300" fill="none"/>
<rect x="43.500" y="422.500" width="11" height="9" fill="#8a8a8a" stroke="#dcdcdc" stroke-width="1.200"/><rect x="48.500" y="419.500" width="11" height="9" fill="#8a8a8a" stroke="#dcdcdc" stroke-width="1.200"/><path d="M65 431v3h-3z" fill="#b8b8b8"/>
<path d="M1144.6 180.7L1144.6 99.2L1146.1 99.2L1146.1 163.8L1147.7 169.9L1148.5 179.9L1150.0 179.9L1150.8 173.0L1152.3 176.1L1153.1 136.1L1154.1 136.1L1154.6 176.1L1155.1 142.3L1156.0 142.3L1156.3 175.3L1158.4 175.3L1163.1 177.3L1186.1 177.6L1209.2 177.3L1219.9 175.8L1232.2 174.9L1241.5 173.0L1244.5 174.2L1247.6 176.1L1259.9 176.4L1272.2 175.3L1279.1 174.2L1283.0 163.8L1286.0 148.4L1289.1 133.0L1291.4 120.7L1291.4 103.8L1293.7 105.4L1295.3 104.6L1301.4 103.1L1303.0 98.5L1305.3 99.2L1306.0 97.4L1318.3 97.7L1319.9 105.4L1322.2 120.7L1324.5 140.7L1326.0 151.5L1328.3 152.3L1331.4 157.6L1334.5 166.9L1336.8 177.6L1338.3 180.7Z" fill="#fff"/>
<path d="M1328.300 104.500l5.800 11h-11.600z" fill="#dedede"/><rect x="1327.600" y="108" width="1.500" height="4" fill="#333"/><rect x="1327.600" y="113" width="1.500" height="1.400" fill="#333"/>
<rect x="1112.500" y="89.500" width="4" height="4" stroke="#dcdcdc" fill="none"/><rect x="1112.500" y="95.500" width="4" height="4" stroke="#dcdcdc" fill="none"/><rect x="1112" y="101" width="5" height="5" fill="#c8c8c8"/>
<path d="M1120.500 104q7.500-3.500 4-13" stroke="#dcdcdc" stroke-width="2" fill="none"/><path d="M1118.500 93l6.500-5 1.500 7z" fill="#dcdcdc"/>
<path d="M1111 118l15.500 7.500-15.500 7.500z" fill="#c8c8c8"/>
<g transform="translate(0 3.5)"><path d="M1113.500 166h9v9h-9z" fill="#c8c8c8"/><path d="M1116 166l-3-6M1118 166v-8M1120 166l3.500-6" stroke="#c8c8c8" stroke-width="1.500"/><ellipse cx="1112" cy="156.500" rx="1.900" ry="3.300" transform="rotate(-28 1112 156.500)" fill="#dcdcdc"/><ellipse cx="1118" cy="154.500" rx="1.900" ry="3.300" fill="#dcdcdc"/><ellipse cx="1124.300" cy="156.500" rx="1.900" ry="3.300" transform="rotate(28 1124.300 156.500)" fill="#dcdcdc"/></g>
<path d="M1109.500 192h12" stroke="#c8c8c8" stroke-width="1.600"/><path d="M1109.500 191q3-5 8 0q-4 4-8 0z" fill="#c8c8c8"/><path d="M1109.500 199.500h12" stroke="#c8c8c8" stroke-width="1.600"/><path d="M1121 194.500l6-2v10l-6-2q-3-3 0-6z" fill="#c8c8c8"/><path d="M1121 188.500h6v2h-6z" fill="#c8c8c8"/>
<path d="M1109.500 228.500h5M1109.500 231.500h5M1109.500 234.500h5" stroke="#dcdcdc" stroke-width="1.300" stroke-dasharray="1.500 1"/><circle cx="1121.500" cy="229.500" r="2.600" fill="#c8c8c8"/><path d="M1120 231h3l.8 4h-4.600z" fill="#c8c8c8"/><rect x="1115" y="235" width="13" height="4" fill="#c8c8c8"/><rect x="1115" y="241" width="13" height="1.500" fill="#c8c8c8"/>
<defs><linearGradient id="gh" x1="0" x2="1"><stop offset="0" stop-color="#4a4a4a"/><stop offset="1" stop-color="#d8d8d8"/></linearGradient><linearGradient id="gd" x1="0" y1="0" x2="1" y2="1"><stop offset="0" stop-color="#d0d0d0"/><stop offset=".5" stop-color="#707070"/><stop offset="1" stop-color="#d0d0d0"/></linearGradient><linearGradient id="gv" x1="0" x2="0" y1="0" y2="1"><stop offset="0" stop-color="#666"/><stop offset="1" stop-color="#ddd"/></linearGradient></defs>
<circle cx="1193.6" cy="239.3" r="3.600" fill="none" stroke="#dcdcdc" stroke-width="1.300"/><path d="M1193.6 235.70000000000002a3.600 3.600 0 0 0 0 7.200z" fill="#dcdcdc"/>
<path d="M1199.0 239.3L1201.8 239.3" stroke="#dcdcdc" stroke-width="1.600"/>
<path d="M1197.4 243.1L1199.4 245.1" stroke="#dcdcdc" stroke-width="1.600"/>
<path d="M1193.6 244.7L1193.6 247.5" stroke="#dcdcdc" stroke-width="1.600"/>
<path d="M1189.8 243.1L1187.8 245.1" stroke="#dcdcdc" stroke-width="1.600"/>
<path d="M1188.2 239.3L1185.4 239.3" stroke="#dcdcdc" stroke-width="1.600"/>
<path d="M1189.8 235.5L1187.8 233.5" stroke="#dcdcdc" stroke-width="1.600"/>
<path d="M1193.6 233.9L1193.6 231.1" stroke="#dcdcdc" stroke-width="1.600"/>
<path d="M1197.4 235.5L1199.4 233.5" stroke="#dcdcdc" stroke-width="1.600"/>
<path d="M1209 243.700v-6l1.500-3 1.500 4 1.500-6 1.500 5 1.500-6 1.500 5 1.500-5 1.500 5 1.500-4 1.500 4 1.500-3 1.600 4v6z" fill="#c8c8c8"/>
<rect x="1234.5" y="233.5" width="15.0" height="12.0" fill="#6a6a6a" stroke="#dcdcdc" stroke-width="1.200"/><path d="M1239.500 233v13M1244.500 233v13M1234 237.500h16M1234 241.500h16" stroke="#c8c8c8" stroke-width=".8"/><path d="M1235 245q6 0 7-6t7-6" stroke="#fff" stroke-width="1.400" fill="none"/>
<rect x="1258.5" y="233.5" width="15.0" height="12.0" fill="#5a5a5a" stroke="#dcdcdc" stroke-width="1.200"/><path d="M1258.500 245.500l15-12v12z" fill="#c8c8c8"/><path d="M1260 237.500h5M1262.500 235v5" stroke="#fff" stroke-width="1.200"/><path d="M1266 242.500h5" stroke="#444" stroke-width="1.300"/>
<path d="M1283 233h15.500l-7.700 14z" fill="url(#gv)" stroke="#c8c8c8" stroke-width="1"/>
<rect x="1174.5" y="260.5" width="15.0" height="12.0" fill="url(#gh)" stroke="#dcdcdc" stroke-width="1.200"/><rect x="1175" y="261" width="14" height="4.500" fill="#9a9a9a"/><path d="M1175 266h14" stroke="#dcdcdc" stroke-width=".9"/>
<path d="M1205.500 259v4M1199 263.500h13" stroke="#dcdcdc" stroke-width="1.500"/><path d="M1203 258.500h5l-2.500 3z" fill="#dcdcdc"/><path d="M1201 264l-3 6h6zM1210 264l-3 6h6z" fill="none" stroke="#dcdcdc" stroke-width="1"/><path d="M1197.500 270.500a3.500 2.500 0 0 0 7 0zM1206.500 270.500a3.500 2.500 0 0 0 7 0z" fill="#dcdcdc"/>
<rect x="1222.5" y="260.5" width="15.0" height="12.0" fill="#d4d4d4" stroke="#dcdcdc" stroke-width="1.200"/><rect x="1223.200" y="261.200" width="6" height="10.600" fill="#555"/>
<rect x="1245.500" y="260.500" width="13" height="9" fill="#c8c8c8"/><rect x="1248" y="258.500" width="5" height="2.500" fill="#c8c8c8"/><circle cx="1252" cy="265" r="2.500" fill="#555"/><circle cx="1257" cy="269" r="4.600" fill="#8a8a8a" stroke="#dcdcdc" stroke-width="1.300"/>
<circle cx="1277.500" cy="263" r="4.300" fill="#c8c8c8"/><circle cx="1273.800" cy="269" r="4.300" fill="#c8c8c8"/><circle cx="1281.300" cy="269" r="4.300" fill="#c8c8c8"/><path d="M1277.500 272v-5l-3-3M1277.500 267l3-3" stroke="#444" stroke-width="1.300" fill="none"/>
<rect x="1294.5" y="260.5" width="15.0" height="12.0" fill="url(#gh)" stroke="#dcdcdc" stroke-width="1.200"/><path d="M1299.500 260v13M1304.500 260v13M1294 264.500h16M1294 268.500h16" stroke="#dcdcdc" stroke-width=".9"/>
<rect x="1186.5" y="287.5" width="15.0" height="12.0" fill="#cfcfcf" stroke="#dcdcdc" stroke-width="1.200"/><path d="M1187 299q4-1 6-5t8-6v11z" fill="#444"/><circle cx="1191" cy="291" r="2.200" fill="#444"/><circle cx="1197" cy="296" r="2.200" fill="#ccc"/>
<rect x="1210.5" y="287.5" width="15.0" height="12.0" fill="url(#gd)" stroke="#dcdcdc" stroke-width="1.200"/>
<rect x="1234.5" y="287.5" width="15.0" height="12.0" fill="#d8d8d8" stroke="#dcdcdc" stroke-width="1.200"/><path d="M1235 297l3-3 2 1 3-4 2 1 4-4v4l-4 3-2-1-3 4-2-1-3 3z" fill="#333"/>
<rect x="1258.5" y="287.5" width="15.0" height="12.0" fill="#b8b8b8" stroke="#dcdcdc" stroke-width="1.200"/><path d="M1259 288l7 5.500-7 5.500zM1273 288l-7 5.500 7 5.500z" fill="#7a7a7a"/>
<rect x="1282.5" y="287.5" width="15.0" height="12.0" fill="url(#gh)" stroke="#dcdcdc" stroke-width="1.200"/>
<circle cx="1156.500" cy="342.500" r="3.200" stroke="#e0e0e0" stroke-width="1.500" fill="none"/><path d="M1154.300 345l-3.300 3.500" stroke="#e0e0e0" stroke-width="1.800" stroke-linecap="round"/>
<path d="M1222.5 343.0h6l-3-3.500zM1222.5 346.0h6l-3 3.500z" fill="#e8e8e8"/>
<path d="M1261.5 371.0h6l-3-3.500zM1261.5 374.0h6l-3 3.500z" fill="#e8e8e8"/>
<rect x="1244.500" y="338.500" width="12" height="10" stroke="#e0e0e0" stroke-width="1.200" fill="none"/><path d="M1246 347l3-3.500 2 2 2-3 2.500 4.500z" fill="#e0e0e0"/><circle cx="1253.500" cy="341.500" r="1.100" fill="#e0e0e0"/>
<circle cx="1274" cy="343.500" r="5" fill="#c8c8c8"/><path d="M1270.500 347a5 5 0 0 0 7-7z" fill="#5e5e5e"/><circle cx="1274" cy="343.500" r="5" fill="none" stroke="#c8c8c8" stroke-width="1.200"/>
<text x="1298" y="349.500" font-family="Liberation Serif,serif" font-size="16" text-anchor="middle" fill="#e0e0e0">T</text>
<rect x="1317.500" y="339" width="9.500" height="9.500" stroke="#e0e0e0" stroke-width="1.200" fill="none"/><rect x="1316" y="337.5" width="3" height="3" fill="#535353" stroke="#e0e0e0" stroke-width=".9"/><rect x="1316" y="347" width="3" height="3" fill="#535353" stroke="#e0e0e0" stroke-width=".9"/><rect x="1325.5" y="337.5" width="3" height="3" fill="#535353" stroke="#e0e0e0" stroke-width=".9"/><rect x="1325.5" y="347" width="3" height="3" fill="#535353" stroke="#e0e0e0" stroke-width=".9"/>
<path d="M1343.500 337.500h5l3 3v7.500h-8z" stroke="#e0e0e0" stroke-width="1.200" fill="#707070"/><rect x="1341" y="343" width="5.500" height="6" fill="#c8c8c8"/>
<path d="M1358 372h6l-3 3.500z" fill="#ddd"/><path d="M1358 400h6l-3 3.500z" fill="#ddd"/>
<rect x="1178" y="395" width="11" height="11" fill="#7c7c7c"/><rect x="1178.00" y="395.00" width="3.670" height="3.670" fill="#9c9c9c"/><rect x="1185.34" y="395.00" width="3.670" height="3.670" fill="#9c9c9c"/><rect x="1181.67" y="398.67" width="3.670" height="3.670" fill="#9c9c9c"/><rect x="1178.00" y="402.34" width="3.670" height="3.670" fill="#9c9c9c"/><rect x="1185.34" y="402.34" width="3.670" height="3.670" fill="#9c9c9c"/>
<path d="M1206 404l7-9" stroke="#8a8a8a" stroke-width="1.800"/><path d="M1204 406q1-3 3-2.500t-3 2.500z" fill="#8a8a8a"/>
<path d="M1228 395v11M1222.500 400.500h11" stroke="#8a8a8a" stroke-width="1.200"/><path d="M1228 393.500l2 2.500h-4zM1228 407.500l2-2.500h-4zM1221 400.500l2.500-2v4zM1235 400.500l-2.500-2v4z" fill="#8a8a8a"/>
<rect x="1245.500" y="399" width="9" height="7" fill="#d8d8d8"/><path d="M1247.500 399v-2a2.500 2.500 0 0 1 5 0v2" stroke="#d8d8d8" stroke-width="1.400" fill="none"/><rect x="1249.300" y="401" width="1.400" height="3" fill="#444"/>
<path d="M1147.500 427.5q6.500-7.500 13 0q-6.500 7-13 0z" fill="#d2d2d2"/><circle cx="1154.300" cy="427.2" r="2.400" fill="#4a4a4a"/><circle cx="1153.600" cy="426.5" r=".8" fill="#ddd"/>
<path d="M1147.500 453q6.500-7.500 13 0q-6.500 7-13 0z" fill="#d2d2d2"/><circle cx="1154.300" cy="452.7" r="2.400" fill="#4a4a4a"/><circle cx="1153.600" cy="452" r=".8" fill="#ddd"/>
<path d="M1147.500 481q6.500-7.500 13 0q-6.500 7-13 0z" fill="#d2d2d2"/><circle cx="1154.300" cy="480.7" r="2.400" fill="#4a4a4a"/><circle cx="1153.600" cy="480" r=".8" fill="#ddd"/>
<path d="M1147.500 509q6.500-7.500 13 0q-6.500 7-13 0z" fill="#d2d2d2"/><circle cx="1154.300" cy="508.7" r="2.400" fill="#4a4a4a"/><circle cx="1153.600" cy="508" r=".8" fill="#ddd"/>
<path d="M1147.500 537q6.500-7.500 13 0q-6.500 7-13 0z" fill="#d2d2d2"/><circle cx="1154.300" cy="536.7" r="2.400" fill="#4a4a4a"/><circle cx="1153.600" cy="536" r=".8" fill="#ddd"/>
<path d="M1147.500 565q6.500-7.500 13 0q-6.500 7-13 0z" fill="#d2d2d2"/><circle cx="1154.300" cy="564.7" r="2.400" fill="#4a4a4a"/><circle cx="1153.600" cy="564" r=".8" fill="#ddd"/>
<path d="M1147.500 593q6.500-7.500 13 0q-6.500 7-13 0z" fill="#d2d2d2"/><circle cx="1154.300" cy="592.7" r="2.400" fill="#4a4a4a"/><circle cx="1153.600" cy="592" r=".8" fill="#ddd"/>
<path d="M1147.500 621q6.500-7.500 13 0q-6.500 7-13 0z" fill="#d2d2d2"/><circle cx="1154.300" cy="620.7" r="2.400" fill="#4a4a4a"/><circle cx="1153.600" cy="620" r=".8" fill="#ddd"/>
<path d="M1147.500 649q6.500-7.500 13 0q-6.500 7-13 0z" fill="#d2d2d2"/><circle cx="1154.300" cy="648.7" r="2.400" fill="#4a4a4a"/><circle cx="1153.600" cy="648" r=".8" fill="#ddd"/>
<path d="M1175.500 423.500v9l5-4.500z" fill="#f2f2f2"/>
<path d="M1187 423.500q0-2 2-2h3.500l1.500 2h7.300v9.500h-14.300z" fill="#cdd5e2"/>
<rect x="1209.5" y="445" width="5.500" height="7" rx="2" stroke="#c8c8c8" stroke-width="1.700" fill="none"/><rect x="1209.5" y="454" width="5.500" height="7" rx="2" stroke="#c8c8c8" stroke-width="1.700" fill="none"/><path d="M1212.25 450v6" stroke="#c8c8c8" stroke-width="1.700"/><rect x="1209.5" y="501" width="5.500" height="7" rx="2" stroke="#c8c8c8" stroke-width="1.700" fill="none"/><rect x="1209.5" y="510" width="5.500" height="7" rx="2" stroke="#c8c8c8" stroke-width="1.700" fill="none"/><path d="M1212.25 506v6" stroke="#c8c8c8" stroke-width="1.700"/><rect x="1225.5" y="529" width="5.500" height="7" rx="2" stroke="#c8c8c8" stroke-width="1.700" fill="none"/><rect x="1225.5" y="538" width="5.500" height="7" rx="2" stroke="#c8c8c8" stroke-width="1.700" fill="none"/><path d="M1228.25 534v6" stroke="#c8c8c8" stroke-width="1.700"/><rect x="1209.5" y="585" width="5.500" height="7" rx="2" stroke="#c8c8c8" stroke-width="1.700" fill="none"/><rect x="1209.5" y="594" width="5.500" height="7" rx="2" stroke="#c8c8c8" stroke-width="1.700" fill="none"/><path d="M1212.25 590v6" stroke="#c8c8c8" stroke-width="1.700"/><rect x="1209.5" y="641" width="5.500" height="7" rx="2" stroke="#c8c8c8" stroke-width="1.700" fill="none"/><rect x="1209.5" y="650" width="5.500" height="7" rx="2" stroke="#c8c8c8" stroke-width="1.700" fill="none"/><path d="M1212.25 646v6" stroke="#c8c8c8" stroke-width="1.700"/>
<circle cx="1188" cy="509" r="4.800" fill="#c8c8c8"/><path d="M1184.6 512.4a4.800 4.800 0 0 0 6.800-6.800z" fill="#6a6a6a"/><circle cx="1188" cy="509" r="4.800" fill="none" stroke="#c8c8c8" stroke-width="1.200"/><circle cx="1204" cy="537" r="4.800" fill="#c8c8c8"/><path d="M1200.6 540.4a4.800 4.800 0 0 0 6.800-6.800z" fill="#6a6a6a"/><circle cx="1204" cy="537" r="4.800" fill="none" stroke="#c8c8c8" stroke-width="1.200"/>
<path d="M1185 532.5h-3v6" stroke="#e0e0e0" stroke-width="1.300" fill="none"/><path d="M1182 541.5l-3-3.500h6z" fill="#e0e0e0"/><path d="M1185 560.5h-3v6" stroke="#e0e0e0" stroke-width="1.300" fill="none"/><path d="M1182 569.5l-3-3.500h6z" fill="#e0e0e0"/>
<rect x="1176.500" y="686.5" width="8" height="6" rx="3" stroke="#a8a8a8" stroke-width="1.500" fill="none"/><rect x="1182" y="686.5" width="8" height="6" rx="3" stroke="#a8a8a8" stroke-width="1.500" fill="none"/>
<text x="1203" y="693.5" font-family="Liberation Serif,serif" font-style="italic" font-size="14" fill="#e0e0e0">fx</text><path d="M1215.500 693.0h3l-1.500 2z" fill="#e0e0e0"/>
<rect x="1231.500" y="684.5" width="12" height="10" fill="#c8c8c8"/><circle cx="1237.500" cy="689.5" r="3" fill="#4a4a4a"/>
<circle cx="1264" cy="689.5" r="5" fill="#c8c8c8"/><path d="M1260.500 693.0a5 5 0 0 0 7-7z" fill="#5e5e5e"/><circle cx="1264" cy="689.5" r="5" fill="none" stroke="#c8c8c8" stroke-width="1.200"/><path d="M1270.500 693.0h3l-1.500 2z" fill="#e0e0e0"/>
<path d="M1285 686.0q0-2 2-2h3l1.500 2h5.500v9h-12z" fill="#c8c8c8"/>
<path d="M1313.500 684.0h9v11h-5.500v-4h-3.500z" fill="#c8c8c8"/><path d="M1312.500 690.5h4v4z" fill="#c8c8c8"/>
<path d="M1340.500 687.5h8l-1 8h-6z" fill="none" stroke="#c8c8c8" stroke-width="1.300"/><path d="M1339.500 686.0h10" stroke="#c8c8c8" stroke-width="1.500"/><path d="M1343 684.0h3" stroke="#c8c8c8" stroke-width="1.500"/><path d="M1343 688.5v6M1346 688.5v6" stroke="#c8c8c8" stroke-width="1"/>
<rect x="124.500" y="714" width="18" height="11" rx="2" fill="#6a6a6a"/><circle cx="130" cy="719.500" r="3" fill="#505050"/><path d="M135 719.500h5M137.500 717v5" stroke="#505050" stroke-width="1.500"/>
<path d="M320.500 715v9l6-4.500z" fill="#f0f0f0"/>
<path d="M485.5 69.500l6 6M491.5 69.500l-6 6" stroke="#c8c8c8" stroke-width="1.300"/>
<path d="M696 69.500l6 6M702 69.500l-6 6" stroke="#c8c8c8" stroke-width="1.300"/>
<defs>
<symbol id="portrait" viewBox="0 0 31 21"><rect width="31" height="21" fill="#f6f5f3"/><path d="M4 21q1-4 7-5l9 0q7 1 8 5z" fill="#23201e"/><path d="M10.500 6q0-4.500 5-4.500t5 4.500v5q0 5.500-5 6q-5-.5-5-6z" fill="#c49b82"/><path d="M9.500 7q-.8-6.500 6-6.500t6 6.500q-1-3.500-6-3.500t-6 3.500z" fill="#4b3a2d"/><path d="M12 8.500h3M16.500 8.500h3" stroke="#5a4436" stroke-width=".9"/><path d="M13.500 13.500h4.500v2.500h-4.500z" fill="#7a5a48"/><path d="M14.500 17l1.200 4 1.200-4z" fill="#e8e4e0"/></symbol>
<symbol id="maskhead" viewBox="0 0 31 21"><rect width="31" height="21" fill="#000"/><path d="M4 21q1-3.500 6-4.500q2.500-.5 2.200-2.500q-2.500-2.500-2.500-7q0-6.300 6-6.300t6 6.300q0 4.500-2.500 7q-.3 2 2.200 2.500q5 1 6 4.500z" fill="#fff"/></symbol>
<symbol id="l4" viewBox="0 0 31 21"><rect width="31" height="21" fill="#fff"/><g fill="#d2d2d2"><rect x="2" y="3" width="4" height="4"/><rect x="6" y="7" width="4" height="4"/><rect x="2" y="11" width="4" height="4"/><rect x="10" y="3" width="4" height="4"/><rect x="22" y="3" width="4" height="4"/><rect x="26" y="7" width="4" height="4"/><rect x="22" y="11" width="4" height="4"/><rect x="10" y="11" width="4" height="4"/><rect x="26" y="15" width="4" height="4"/><rect x="6" y="15" width="4" height="3"/></g><path d="M16.500 4q.5-2.500 2.500-2.500t2 3l.5 6-.5 7h-4.500l.5-6q-1.500-1-1.500-3.500z" fill="#0a0a0a"/><path d="M1.500 20q5-1 8-3.500t5 0l6 1q5 .5 8.500 2.500v1h-27.500z" fill="#0a0a0a"/><rect x=".5" y=".5" width="30" height="20" fill="none" stroke="#111" stroke-width="1"/></symbol>
<symbol id="l2" viewBox="0 0 31 21"><rect width="31" height="21" fill="#0b0b0b"/><path d="M7 1l2 0 1 8 2-7 3-1 3 1 1 12 -1 4-4-1-2-6-2 7-3 0z" fill="#e8e8e8"/><path d="M2 3l2 0 1 9-2 4z" fill="#bdbdbd"/><path d="M13 2l1 14M16 3l0 13M10 5l1 9" stroke="#111" stroke-width=".9"/><rect x="28.500" y="1" width="2" height="17" fill="#f2f2f2"/><path d="M1 18.500h8M12 19h9M24 18.500h5" stroke="#d8c9a0" stroke-width="1.100" stroke-dasharray="1.500 1"/></symbol>
<linearGradient id="gfill" x1="0" y1="0" x2="1" y2="1"><stop offset="0" stop-color="#3a3a3a"/><stop offset=".45" stop-color="#777"/><stop offset="1" stop-color="#f4f4f4"/></linearGradient>
</defs>
<rect x="1173.5" y="442.200" width="31" height="20.600" fill="#4a4a4a" stroke="#262626" stroke-width="1"/><rect x="1180.300" y="444.300" width="17" height="16" fill="url(#gfill)"/>
<rect x="1220.6" y="442.2" width="31" height="20.600" fill="#fff" stroke="#1e1e1e" stroke-width="1"/><rect x="1220.6" y="498.2" width="31" height="20.600" fill="#fff" stroke="#1e1e1e" stroke-width="1"/><rect x="1236.6" y="526.2" width="31" height="20.600" fill="#fff" stroke="#1e1e1e" stroke-width="1"/>
<use href="#l2" x="1173.5" y="470.2" width="31" height="20.600"/>
<use href="#l4" x="1189.6" y="554.2" width="31" height="20.600"/>
<use href="#portrait" x="1173.5" y="582.2" width="31" height="20.600"/><use href="#maskhead" x="1220.6" y="582.2" width="31" height="20.600"/>
<rect x="1173.5" y="610.200" width="31" height="20.600" fill="#fdfdfd" stroke="#222" stroke-width=".6"/>
<use href="#portrait" x="1173.5" y="638.2" width="31" height="20.600"/><use href="#maskhead" x="1220.6" y="638.2" width="31" height="20.600"/>
</svg>
<!-- ANNOTATIONS -->
<svg class="a" id="anno" style="left:0;top:0" width="1366" height="730" viewBox="0 0 1366 730" fill="none">
<line x1="506.500" y1="106.500" x2="660.500" y2="231.500" stroke="#e8813a" stroke-width="5.200" stroke-linecap="round"/>
<path d="M1233 397.500C1277.800 397.500 1345 447.700 1345 541C1345 634.500 1278.400 679.500 1234 679.500C1220.400 679.500 1125 651.600 1125 540C1125 433.100 1189.800 397.500 1233 397.500Z" stroke="#e8813a" stroke-width="5.200"/>
</svg>
</body></html>
